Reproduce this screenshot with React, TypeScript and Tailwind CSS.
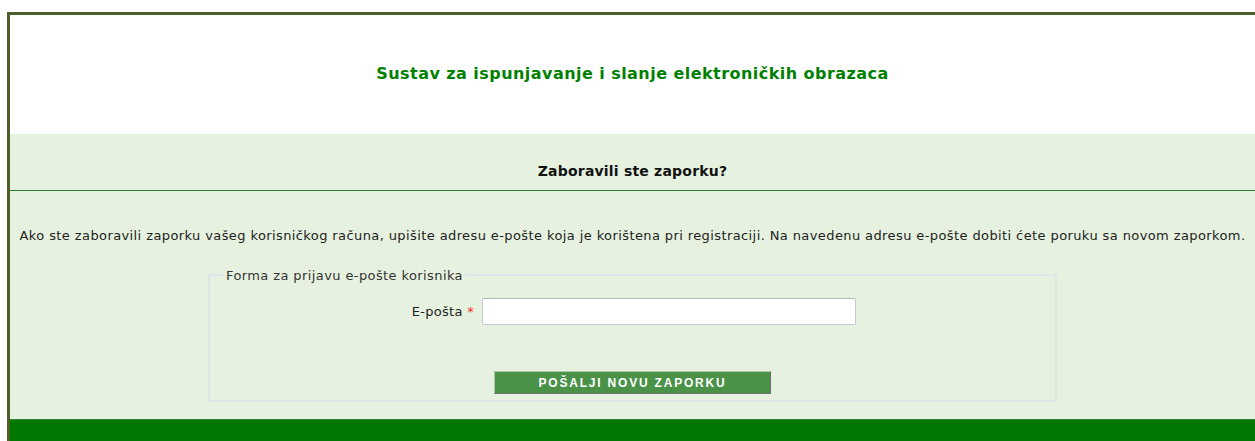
import React, { useState } from 'react';

const font = { fontFamily: '"DejaVu Sans", Verdana, sans-serif' };

const ForgottenPasswordForm: React.FC = () => {
  const [email, setEmail] = useState('');

  return (
    <fieldset className="mx-auto w-[849px] rounded-[3px] border-2 border-[#dfe5e8] px-[14px] pb-[6px]">
      <legend className="px-[2px] text-[13px] tracking-[0.4px] text-[#333]">Forma za prijavu e-pošte korisnika</legend>
      <div className="mt-[13px] flex items-center">
        <label htmlFor="email" className="w-[250px] text-right text-[13px] tracking-[0.3px] text-[#222]">
          E-pošta <span className="text-[#ff2a2a]">*</span>
        </label>
        <input
          id="email"
          type="text"
          value={email}
          onChange={e => setEmail(e.target.value)}
          className="ml-[8px] h-[27px] w-[374px] rounded-[2px] border border-[#c6cad0] border-t-[#b4b8bf] bg-white px-1 text-[12px] outline-none"
        />
      </div>
      <div className="mt-[46px] flex justify-center">
        <button
          type="button"
          className="h-[23px] w-[277px] border border-[#a7c7a6] border-b-[#6e6e6e] border-r-[#6e6e6e] bg-[#4a9248] text-[12px] font-bold tracking-[1.8px] text-white"
          style={{ fontFamily: '"Liberation Sans", Arial, sans-serif' }}
        >
          POŠALJI NOVU ZAPORKU
        </button>
      </div>
    </fieldset>
  );
};

const App: React.FC = () => {
  return (
    <div className="min-h-[441px] overflow-hidden bg-white pl-[7px] pt-[12px]" style={font}>
      <div className="border-l-[3px] border-t-[3px] border-[#4c5e2a]">
        {/* Header */}
        <div className="flex h-[119px] items-center justify-center pb-[2px]">
          <h1 className="text-[16px] font-bold tracking-[0.45px] text-[#008000]">
            Sustav za ispunjavanje i slanje elektroničkih obrazaca
          </h1>
        </div>

        {/* Content */}
        <div className="bg-[#e6f2df]">
          <div className="flex h-[57px] items-end justify-center border-b border-[#2c7d2c] pb-[8px]">
            <h2 className="text-[14px] font-bold tracking-[0.2px] text-[#111]">Zaboravili ste zaporku?</h2>
          </div>
          <p className="mt-[35px] whitespace-nowrap text-center text-[13px] tracking-[0.4px] text-[#222]">
            Ako ste zaboravili zaporku vašeg korisničkog računa, upišite adresu e-pošte koja je korištena pri registraciji. Na navedenu adresu e-pošte dobiti ćete poruku sa novom zaporkom.
          </p>
          <div className="pt-[20px] pb-[17px]">
            <ForgottenPasswordForm />
          </div>
        </div>

        {/* Footer */}
        <div className="h-[30px] border-t border-[#2f8a2f] bg-[#007800]" />
      </div>
    </div>
  );
};

export default App;
